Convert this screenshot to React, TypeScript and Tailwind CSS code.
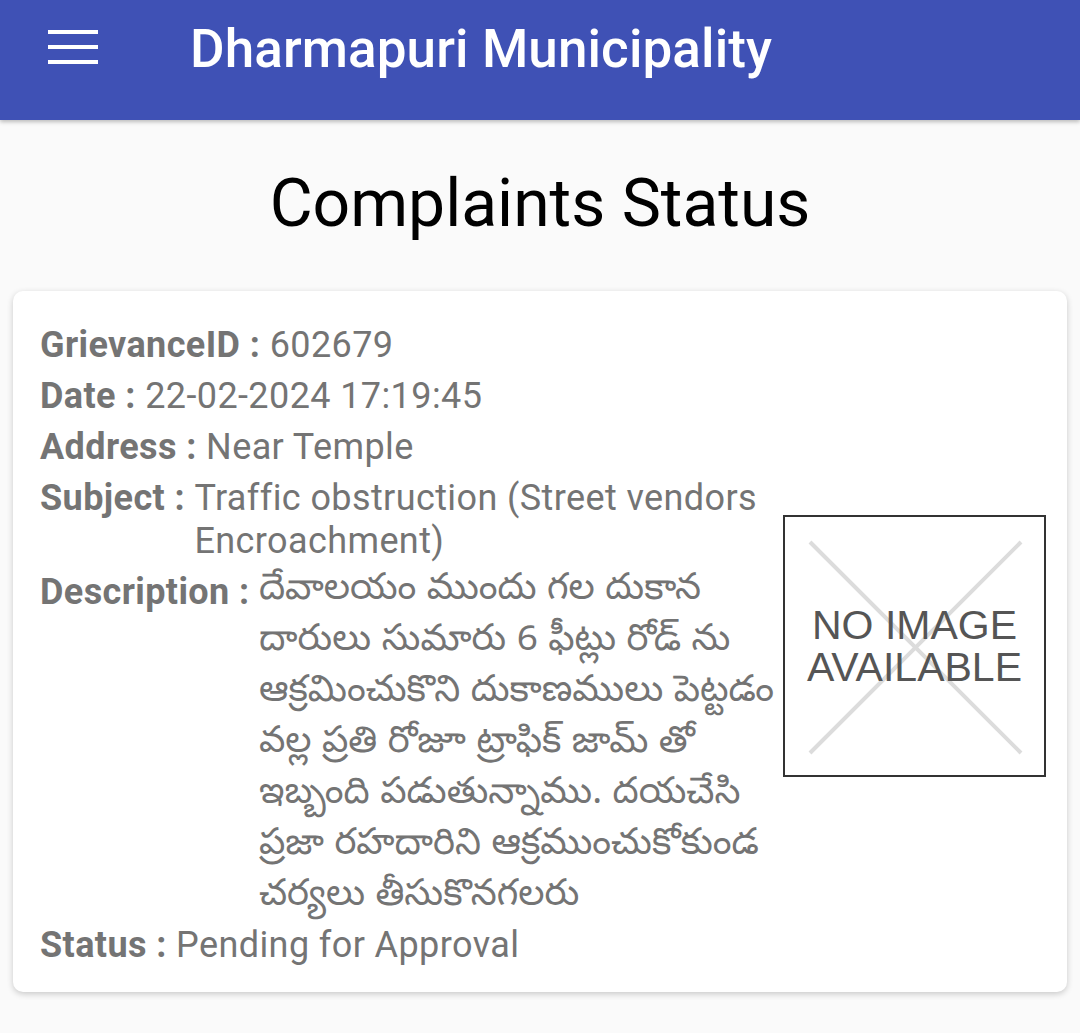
import React from "react";

const rows: { label: string; value: string; telugu?: boolean }[] = [
  { label: "GrievanceID", value: "602679" },
  { label: "Date", value: "22-02-2024 17:19:45" },
  { label: "Address", value: "Near Temple" },
  { label: "Subject", value: "Traffic obstruction (Street vendors Encroachment)" },
  {
    label: "Description",
    value:
      "దేవాలయం ముందు గల దుకాన దారులు సుమారు 6 ఫీట్లు రోడ్ ను ఆక్రమించుకొని దుకాణములు పెట్టడం వల్ల ప్రతి రోజూ ట్రాఫిక్ జామ్ తో ఇబ్బంది పడుతున్నాము. దయచేసి ప్రజా రహదారిని ఆక్రముంచుకోకుండ చర్యలు తీసుకొనగలరు",
    telugu: true,
  },
  { label: "Status", value: "Pending for Approval" },
];

export default function App() {
  return (
    <div
      className="min-h-[1033px] w-[1080px] bg-[#fafafa]"
      style={{ fontFamily: "Roboto, 'Noto Sans', sans-serif" }}
    >
      <header className="relative z-10 flex h-[120px] items-start bg-[#3f51b5] shadow-[0_2px_4px_rgba(0,0,0,0.25)]">
        <div className="ml-[48px] mt-[30px] flex w-[50px] flex-col gap-[11px]">
          <span className="block h-[4px] w-[50px] bg-white" />
          <span className="block h-[4px] w-[50px] bg-white" />
          <span className="block h-[4px] w-[50px] bg-white" />
        </div>
        <h1 className="ml-[92px] mt-[23px] text-[53px] font-medium leading-none tracking-[0.1px] text-white">
          Dharmapuri Municipality
        </h1>
      </header>

      <h2 className="pt-[44px] pb-[47px] text-center text-[66px] leading-[80px] text-black">
        Complaints Status
      </h2>

      <div className="mx-[13px] flex items-center rounded-[10px] bg-white pl-[27px] pr-[21px] pt-[33px] pb-[25px] shadow-[0_2px_6px_rgba(0,0,0,0.2)]">
        <div className="flex w-[743px] flex-col gap-[8px] text-[36px] leading-[43px] tracking-[0.4px] text-[#747474]">
          {rows.map((r) => (
            <div key={r.label} className="flex">
              <span className="shrink-0 whitespace-pre font-bold">{r.label} : </span>
              <span
                className={r.telugu ? "-mt-[4px] -mb-[8px] text-[37px] leading-[51px] tracking-normal" : ""}
                style={
                  r.telugu
                    ? { fontFamily: "'Noto Sans Telugu', Gautami, 'Lohit Telugu', Roboto, sans-serif" }
                    : undefined
                }
              >
                {r.value}
              </span>
            </div>
          ))}
        </div>
        <div className="relative flex h-[262px] w-[263px] shrink-0 items-center justify-center border-2 border-[#333] bg-white">
          <svg className="absolute inset-0" width="259" height="258" viewBox="0 0 259 258">
            <line x1="25" y1="25" x2="236" y2="236" stroke="#dcdcdc" strokeWidth="4" />
            <line x1="236" y1="25" x2="25" y2="236" stroke="#dcdcdc" strokeWidth="4" />
          </svg>
          <div
            className="relative text-center text-[41px] leading-[42px] text-[#555555]"
            style={{ fontFamily: "'Liberation Sans', Arial, sans-serif" }}
          >
            NO IMAGE
            <br />
            AVAILABLE
          </div>
        </div>
      </div>
    </div>
  );
}
